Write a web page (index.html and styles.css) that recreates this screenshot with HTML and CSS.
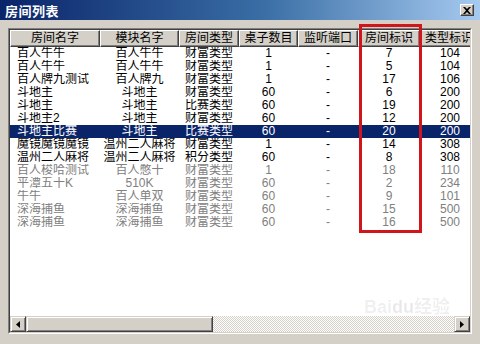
FILE: index.html
```html
<!DOCTYPE html>
<html lang="zh-CN">
<head>
    <meta charset="UTF-8">
    <title>房间列表</title>
    <link rel="stylesheet" href="styles.css">
</head>
<body>

    <!-- Title bar -->
    <div class="titlebar">
        <span class="title">房间列表</span>
        <span class="close">
            <svg width="8" height="7" viewBox="0 0 8 7"><path d="M0 0h2l2 2 2-2h2L5 3.5 8 7H6L4 5 2 7H0l3-3.5z" fill="#000"/></svg>
        </span>
    </div>

    <div class="client">
        <div class="listbox">
            <div class="listinner">
                <div class="grid">
                    <table>
                        <colgroup>
                            <col style="width:90px"><col style="width:79px"><col style="width:60px"><col style="width:59px">
                            <col style="width:60px"><col style="width:62px"><col style="width:60px">
                        </colgroup>
                        <thead>
                            <tr>
                                <th>房间名字</th><th>模块名字</th><th>房间类型</th><th>桌子数目</th>
                                <th>监听端口</th><th>房间标识</th><th class="cut">类型标识</th>
                            </tr>
                        </thead>
                        <tbody>
                            <tr><td>百人牛牛</td><td>百人牛牛</td><td>财富类型</td><td>1</td><td>-</td><td>7</td><td>104</td></tr>
                            <tr><td>百人牛牛</td><td>百人牛牛</td><td>财富类型</td><td>1</td><td>-</td><td>5</td><td>104</td></tr>
                            <tr><td>百人牌九测试</td><td>百人牌九</td><td>财富类型</td><td>1</td><td>-</td><td>17</td><td>106</td></tr>
                            <tr><td>斗地主</td><td>斗地主</td><td>财富类型</td><td>60</td><td>-</td><td>6</td><td>200</td></tr>
                            <tr><td>斗地主</td><td>斗地主</td><td>比赛类型</td><td>60</td><td>-</td><td>19</td><td>200</td></tr>
                            <tr><td>斗地主2</td><td>斗地主</td><td>财富类型</td><td>60</td><td>-</td><td>12</td><td>200</td></tr>
                            <tr class="sel"><td>斗地主比赛</td><td>斗地主</td><td>比赛类型</td><td>60</td><td>-</td><td>20</td><td>200</td></tr>
                            <tr><td>魔镜魔镜魔镜</td><td>温州二人麻将</td><td>财富类型</td><td>1</td><td>-</td><td>14</td><td>308</td></tr>
                            <tr><td>温州二人麻将</td><td>温州二人麻将</td><td>积分类型</td><td>60</td><td>-</td><td>8</td><td>308</td></tr>
                            <tr class="off"><td>百人梭哈测试</td><td>百人憋十</td><td>财富类型</td><td>1</td><td>-</td><td>18</td><td>110</td></tr>
                            <tr class="off"><td>平潭五十K</td><td>510K</td><td>财富类型</td><td>60</td><td>-</td><td>2</td><td>234</td></tr>
                            <tr class="off"><td>牛牛</td><td>百人单双</td><td>财富类型</td><td>60</td><td>-</td><td>9</td><td>101</td></tr>
                            <tr class="off"><td>深海捕鱼</td><td>深海捕鱼</td><td>财富类型</td><td>60</td><td>-</td><td>15</td><td>500</td></tr>
                            <tr class="off"><td>深海捕鱼</td><td>深海捕鱼</td><td>财富类型</td><td>60</td><td>-</td><td>16</td><td>500</td></tr>
                        </tbody>
                    </table>
                </div>

                <!-- Horizontal scrollbar -->
                <div class="hscroll">
                    <span class="sbtn">
                        <svg width="4" height="7" viewBox="0 0 4 7"><path d="M4 0v7L0 3.5z" fill="#000"/></svg>
                    </span>
                    <span class="thumb"></span>
                    <span class="track"></span>
                    <span class="sbtn">
                        <svg width="4" height="7" viewBox="0 0 4 7"><path d="M0 0v7l4-3.5z" fill="#000"/></svg>
                    </span>
                </div>
            </div>
        </div>
    </div>

    <!-- Annotation and watermark -->
    <div class="mark"></div>
    <div class="watermark">Bai<b>du</b>经验</div>

</body>
</html>
```

FILE: styles.css
```css
body {
    margin: 0;
    width: 480px;
    height: 344px;
    overflow: hidden;
    position: relative;
    background-color: #d4d0c8;
    font-family: "Liberation Sans", "Noto Sans CJK SC", sans-serif;
    font-size: 12px;
    color: #000;
}
/* Title bar */
.titlebar {
    height: 20px;
    display: flex;
    align-items: center;
    justify-content: space-between;
    padding: 0 6px 0 5px;
    background: linear-gradient(to right, #0a246a, #3a6ea5 55%, #a6caf0);
}
.title {
    color: #fff;
    font-weight: bold;
    font-size: 13px;
    letter-spacing: 0.5px;
}
.close {
    width: 14px;
    height: 12px;
    box-sizing: border-box;
    display: flex;
    align-items: center;
    justify-content: center;
    background-color: #d4d0c8;
    border: 1px solid;
    border-color: #fff #404040 #404040 #fff;
    box-shadow: inset -1px -1px #808080;
}
/* List */
.client {
    padding: 8px 8px 10px 8px;
}
.listbox {
    height: 306px;
    box-sizing: border-box;
    border: 1px solid;
    border-color: #808080 #fff #fff #808080;
}
.listinner {
    height: 100%;
    box-sizing: border-box;
    display: flex;
    flex-direction: column;
    background-color: #fff;
    border: 1px solid;
    border-color: #404040 #d4d0c8 #d4d0c8 #404040;
}
.grid {
    flex: 1;
    overflow: hidden;
}
table {
    width: 470px;
    table-layout: fixed;
    border-collapse: separate;
    border-spacing: 0;
}
th {
    height: 17px;
    box-sizing: border-box;
    padding: 0;
    font-weight: normal;
    line-height: 15px;
    white-space: nowrap;
    overflow: hidden;
    background-color: #d4d0c8;
    border: 1px solid;
    border-color: #fff #404040 #404040 #fff;
    box-shadow: inset -1px -1px #808080;
}
th.cut {
    text-align: left;
    padding-left: 4px;
}
td {
    height: 13px;
    padding: 0;
    line-height: 13px;
    text-align: center;
    white-space: nowrap;
    overflow: hidden;
}
td:first-child {
    text-align: left;
    padding-left: 7px;
}
tr.sel td {
    background-color: #0a246a;
    color: #fff;
}
tr.off td {
    color: #808080;
}
/* Scrollbar */
.hscroll {
    height: 16px;
    display: flex;
}
.sbtn, .thumb {
    box-sizing: border-box;
    background-color: #d4d0c8;
    border: 1px solid;
    border-color: #d4d0c8 #404040 #404040 #d4d0c8;
    box-shadow: inset 1px 1px #fff, inset -1px -1px #808080;
}
.sbtn {
    width: 16px;
    display: flex;
    align-items: center;
    justify-content: center;
}
.thumb {
    width: 187px;
}
.track {
    flex: 1;
    background-color: #fff;
    background-image: repeating-conic-gradient(#d4d0c8 0 25%, #fff 0 50%);
    background-size: 2px 2px;
}
/* Red annotation box */
.mark {
    position: absolute;
    left: 359px;
    top: 24px;
    width: 63px;
    height: 209px;
    box-sizing: border-box;
    border: 3px solid #d0161d;
}
.watermark {
    position: absolute;
    left: 364px;
    top: 292px;
    font-size: 18px;
    font-weight: bold;
    color: rgba(0, 0, 0, 0.07);
}
.watermark b {
    color: rgba(0, 0, 0, 0.09);
}
```
